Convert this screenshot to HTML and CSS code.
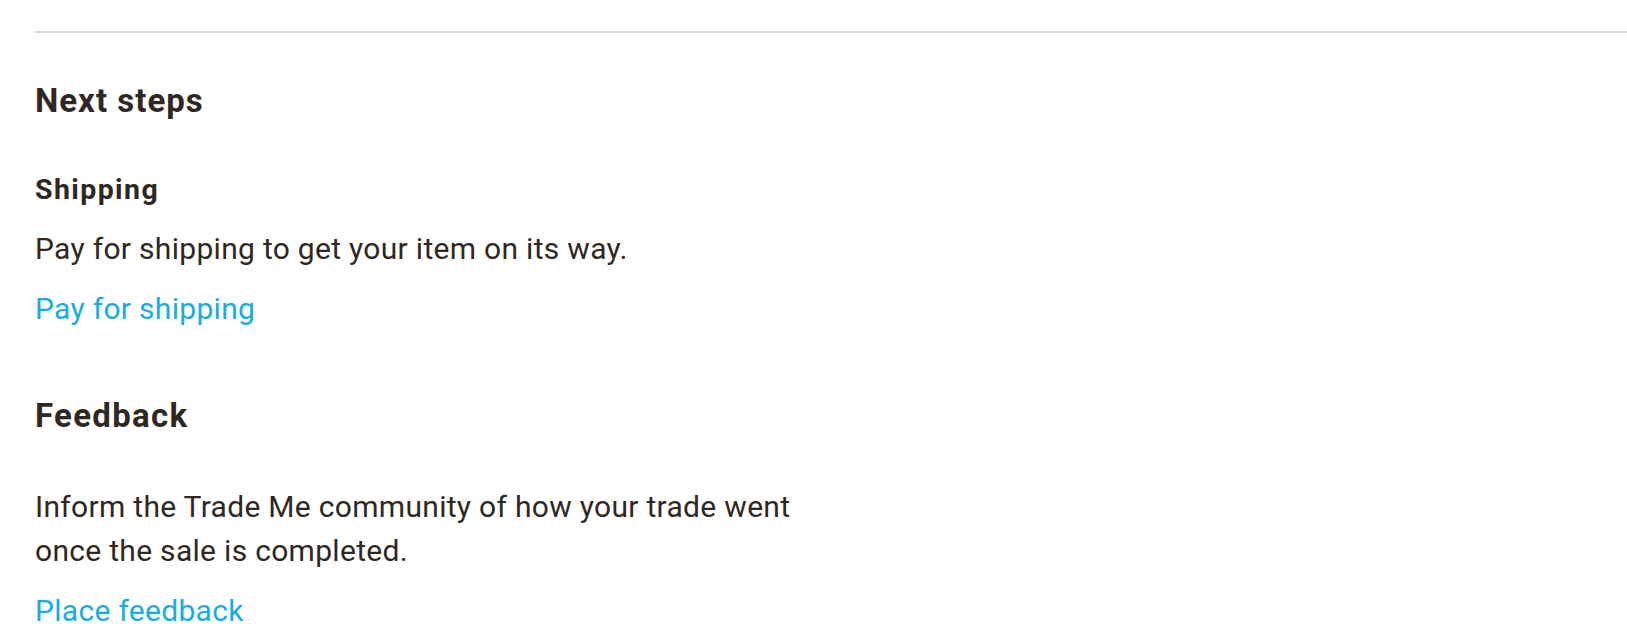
FILE: index.html
```html
<!DOCTYPE html>
<html lang="en">
<head>
<meta charset="utf-8">
<title>Next steps</title>
<link rel="stylesheet" href="styles.css">
</head>
<body>
<main class="page">
  <section class="next-steps">
    <h2 class="title">Next steps</h2>
    <div class="step step-shipping">
      <h3 class="step-title">Shipping</h3>
      <p class="step-text">Pay for shipping to get your item on its way.</p>
      <a class="step-link" href="#">Pay for shipping</a>
    </div>
    <div class="step step-feedback">
      <h3 class="step-title step-title-lg">Feedback</h3>
      <p class="step-text step-text-wrap">Inform the Trade Me community of how your trade went once the sale is completed.</p>
      <a class="step-link" href="#">Place feedback</a>
    </div>
  </section>
</main>
</body>
</html>
```
FILE: styles.css
```css
html, body {
  margin: 0;
  padding: 0;
  background: #ffffff;
}

body {
  font-family: Roboto, "Liberation Sans", Arial, sans-serif;
  color: #2f2822;
}

.page {
  padding-top: 31px;
  padding-left: 35px;
}

.next-steps {
  border-top: 2px solid #dcdcdc;
  padding-top: 48px;
  display: flex;
  flex-direction: column;
}

.title {
  margin: 0;
  font-size: 33px;
  line-height: 40px;
  font-weight: 700;
  letter-spacing: 1px;
}

.step {
  display: flex;
  flex-direction: column;
  align-items: flex-start;
}

.step-shipping {
  margin-top: 50.5px;
}

.step-feedback {
  margin-top: 64.5px;
}

.step-title {
  margin: 0;
  font-size: 28.5px;
  line-height: 36px;
  font-weight: 700;
  letter-spacing: 1.4px;
}

.step-title-lg {
  font-size: 33px;
  line-height: 40px;
  letter-spacing: 1.3px;
}

.step-text {
  margin: 19px 0 0;
  font-size: 30px;
  line-height: 44px;
  letter-spacing: 0.3px;
}

.step-text-wrap {
  margin-top: 49px;
  max-width: 790px;
}

.step-link {
  margin-top: 16.5px;
  font-size: 30px;
  line-height: 44px;
  letter-spacing: 0.3px;
  color: #19ace0;
  text-decoration: none;
}
```
